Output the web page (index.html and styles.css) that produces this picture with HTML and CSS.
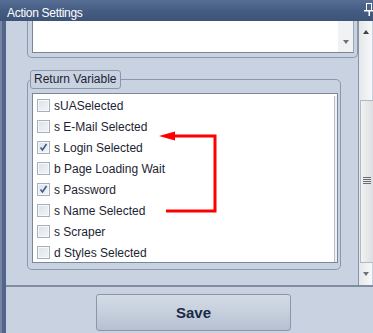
FILE: index.html
```html
<!DOCTYPE html>
<html lang="en">
<head>
    <meta charset="UTF-8">
    <title>Action Settings</title>
    <link rel="stylesheet" href="styles.css">
</head>
<body>
    <div class="titlebar">
        <span class="title">Action Settings</span>
        <svg class="pin" width="10" height="13" viewBox="0 0 10 13">
            <rect x="2.5" y="0.5" width="5" height="7" fill="none" stroke="#fff"/>
            <rect x="0" y="7" width="10" height="1.5" fill="#fff"/>
            <rect x="4.5" y="8" width="1.5" height="5" fill="#fff"/>
        </svg>
    </div>

    <div class="frame">
        <div class="edge"></div>
        <div class="inner">
            <div class="top-row">
                <div class="panel">
                    <div class="box-group">
                        <div class="textarea">
                            <div class="ta-scroll"><span class="tri-down"></span></div>
                        </div>
                    </div>

                    <fieldset class="ret-group">
                        <legend>Return Variable</legend>
                        <div class="list">
                            <div class="row"><span class="cb"></span>sUASelected</div>
                            <div class="row"><span class="cb"></span>s E-Mail Selected</div>
                            <div class="row"><span class="cb checked"><svg width="11" height="11" viewBox="0 0 11 11"><path d="M2.5 5.5 L4.5 8 L8.5 2" fill="none" stroke="#3d5a88" stroke-width="1.6"/></svg></span>s Login Selected</div>
                            <div class="row"><span class="cb"></span>b Page Loading Wait</div>
                            <div class="row"><span class="cb checked"><svg width="11" height="11" viewBox="0 0 11 11"><path d="M2.5 5.5 L4.5 8 L8.5 2" fill="none" stroke="#3d5a88" stroke-width="1.6"/></svg></span>s Password</div>
                            <div class="row"><span class="cb"></span>s Name Selected</div>
                            <div class="row"><span class="cb"></span>s Scraper</div>
                            <div class="row"><span class="cb"></span>d Styles Selected</div>
                            <div class="list-bar"></div>
                        </div>
                    </fieldset>
                </div>

                <div class="vscroll">
                    <span class="tri-up"></span>
                    <div class="thumb">
                        <span class="grip"></span>
                    </div>
                    <span class="tri-down"></span>
                </div>
            </div>

            <div class="footer">
                <button class="save">Save</button>
            </div>
        </div>
    </div>

    <!-- red annotation arrow drawn on top of the list -->
    <svg class="annot" width="373" height="333" viewBox="0 0 373 333">
        <polyline points="173,136 215,136 215,211 166,211" fill="none" stroke="#ff0000" stroke-width="3"/>
        <polygon points="159,136 175,131.5 175,140.5" fill="#ff0000"/>
    </svg>
</body>
</html>
```

FILE: styles.css
```css
body {
    margin: 0;
    width: 373px;
    height: 333px;
    overflow: hidden;
    background: #c8d2e0;
    font-family: 'Liberation Sans', Arial, sans-serif;
    color: #1c2433;
    position: relative;
}

.titlebar {
    height: 21px;
    background: linear-gradient(#566e94 0%, #465d83 50%, #3d5378 100%);
    position: relative;
}

.title {
    position: relative;
    left: 7px;
    top: 3px;
    color: #ffffff;
    font-size: 12px;
    line-height: 15px;
    letter-spacing: -0.3px;
}

.pin {
    position: absolute;
    left: 364px;
    top: 3px;
}

.frame {
    display: flex;
    height: 312px;
}

.edge {
    width: 6px;
    background: linear-gradient(90deg, #7686a2 0px, #7686a2 2px, #52668b 2px);
}

.inner {
    flex: 1;
    display: flex;
    flex-direction: column;
}

.top-row {
    display: flex;
    height: 264px;
    border-bottom: 2px solid #7f8ca2;
}

.panel {
    width: 352px;
    overflow: hidden;
}

.box-group {
    margin-left: 21px;
    width: 322px;
    padding: 0 3px 4px 4px;
    border: 1px solid #8b97aa;
    border-top: none;
    border-radius: 0 0 5px 5px;
}

.textarea {
    height: 31px;
    background: #ffffff;
    border-left: 1px solid #7b8698;
    border-bottom: 1px solid #7b8698;
    border-right: 1px solid #9aa4b4;
    display: flex;
    justify-content: flex-end;
}

.ta-scroll {
    width: 15px;
    background: #f1f2f4;
    display: flex;
    align-items: flex-end;
    justify-content: center;
    padding-bottom: 8px;
    box-sizing: border-box;
}

.tri-down {
    width: 0;
    height: 0;
    border-left: 3.5px solid transparent;
    border-right: 3.5px solid transparent;
    border-top: 4px solid #6e7278;
}

.tri-up {
    width: 0;
    height: 0;
    border-left: 3.5px solid transparent;
    border-right: 3.5px solid transparent;
    border-bottom: 4px solid #3e4248;
}

.ret-group {
    margin: 12px 0 0 21px;
    width: 314px;
    box-sizing: border-box;
    padding: 4px 2px 6px 4px;
    border: 1px solid #8b97aa;
    border-radius: 5px;
}

.ret-group legend {
    margin-left: -2px;
    padding: 0 3px;
    border: 1px solid #8b97aa;
    border-radius: 3px;
    font-size: 12px;
    line-height: 17px;
    color: #1c2433;
}

.list {
    position: relative;
    height: 167px;
    background: #ffffff;
    border: 1px solid #7b8698;
    overflow: hidden;
    padding-left: 4px;
    padding-top: 1px;
}

.row {
    height: 21px;
    display: flex;
    align-items: center;
    font-size: 12px;
}

.cb {
    width: 11px;
    height: 11px;
    margin-right: 4px;
    border: 1px solid #a7b0bd;
    background: linear-gradient(135deg, #dde2e8 0%, #f3f5f7 100%);
    box-shadow: inset 0 0 0 1px #f7f8fa;
    display: flex;
}

.list-bar {
    position: absolute;
    right: 0;
    top: 2px;
    bottom: 0;
    width: 2px;
    border-left: 1px solid #b8bec8;
    background: #eef0f3;
}

.vscroll {
    width: 14px;
    border-left: 1px solid #8895aa;
    background: linear-gradient(90deg, #e4e6e9, #f7f8f9);
    display: flex;
    flex-direction: column;
    align-items: center;
    padding-top: 9px;
    box-sizing: border-box;
}

.thumb {
    margin-top: 66px;
    width: 13px;
    margin-left: 1px;
    height: 163px;
    box-sizing: border-box;
    border: 1px solid #b4b9c0;
    border-right: none;
    background: linear-gradient(90deg, #f2f2f2, #dcdee1);
    display: flex;
    align-items: center;
    justify-content: center;
}

.grip {
    width: 8px;
    height: 7px;
    background: repeating-linear-gradient(#6a6e74 0px, #6a6e74 1px, transparent 1px, transparent 2px);
    margin-top: -3px;
}

.vscroll .tri-down {
    margin-top: 9px;
}

.footer {
    flex: 1;
}

.save {
    display: block;
    margin: 7px 0 0 90px;
    width: 195px;
    height: 37px;
    border: 1px solid #8a97ab;
    border-radius: 3px;
    background: linear-gradient(#d3dbe6 0%, #c6cfdc 50%, #b5c0d1 100%);
    color: #1b2b47;
    font-family: 'Liberation Sans', Arial, sans-serif;
    font-size: 15px;
    font-weight: bold;
    padding: 0;
}

.annot {
    position: absolute;
    left: 0;
    top: 0;
    pointer-events: none;
}
```
